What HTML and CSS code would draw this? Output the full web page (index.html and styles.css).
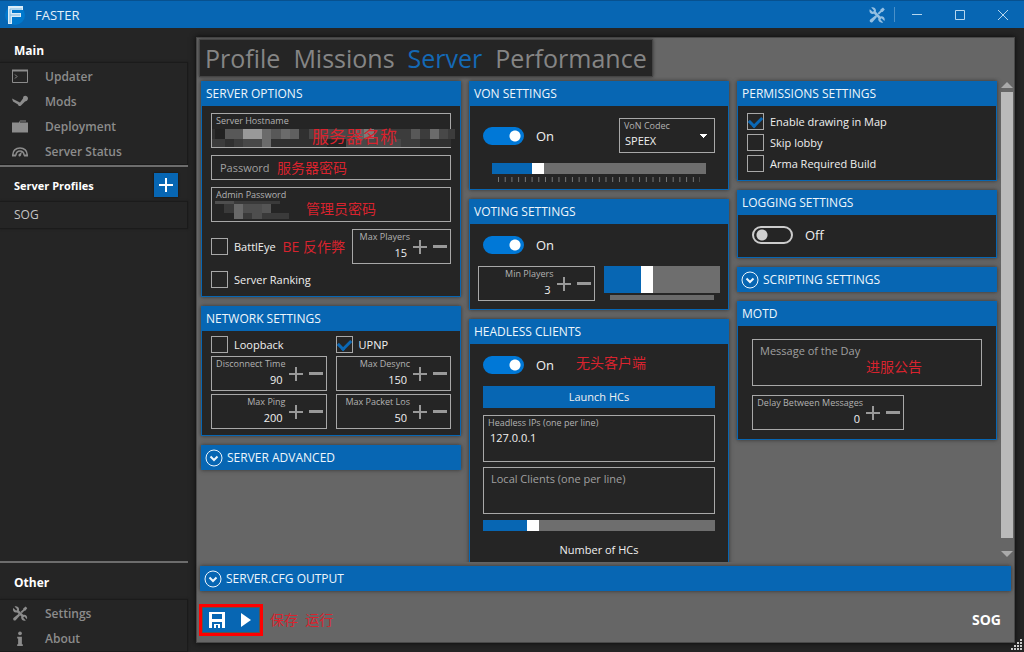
FILE: index.html
```html
<!DOCTYPE html>
<html lang="en">
<head>
<meta charset="utf-8">
<title>FASTER</title>
<link rel="stylesheet" href="styles.css">
</head>
<body>
<svg class="defs" width="0" height="0" aria-hidden="true">
  <symbol id="tools" viewBox="0 0 16 16">
    <path d="M2.2 .6 L5 3.4 L4 5 L.8 2.200 C-.2 4.400 1 6.800 3.600 7 L5 6.800 L9.400 11.200 L9.200 12.600 C9.600 15.200 12 16.200 14.200 15.400 L11.400 12.600 L12.600 11.200 L15.400 14 C16.400 11.800 15 9.400 12.600 9.200 L11.400 9.400 L6.800 4.800 L7 3.200 C6.600 .8 4.200 -.2 2.200 .6Z"/>
    <path d="M14 .6 L15.800 2.400 L13.600 5 L12.600 5 L10 7.600 L8.600 6.200 L11.400 3.600 L11.400 2.600Z M6.600 8.200 L8.200 9.800 L3.400 15.200 C1.800 16.200 0 14.400 1 12.800Z"/>
  </symbol>
  <symbol id="plus" viewBox="0 0 14 14"><path d="M6 0h2v6h6v2H8v6H6V8H0V6h6z"/></symbol>
  <symbol id="minus" viewBox="0 0 14 14"><path d="M0 5h14v3H0z"/></symbol>
  <symbol id="expand" viewBox="0 0 18 18"><circle cx="9" cy="9" r="8" fill="none" stroke="currentColor"/><path d="M5.5 7.5 9 11l3.500-3.500" fill="none" stroke="currentColor" stroke-width="2"/></symbol>
</svg>

<header class="titlebar">
  <svg class="logo" viewBox="0 0 20 22"><circle cx="10" cy="11" r="10" fill="#0078cc"/><path d="M3 2h15v4H7v3h9v4H7v7H3z" fill="#d9ecf8"/><path d="M5 5h12M5 11h10M5 5v14" stroke="#7db8df" fill="none"/></svg>
  <h1 class="app-name">FASTER</h1>
  <button class="win-btn tools" aria-label="Tools"><svg viewBox="0 0 16 16"><use href="#tools"/></svg></button>
  <button class="win-btn" aria-label="Minimize"><svg viewBox="0 0 10 10"><path d="M0 4.500h10" stroke="currentColor"/></svg></button>
  <button class="win-btn" aria-label="Maximize"><svg viewBox="0 0 10 10"><path d="M.5.5h9v9h-9z" stroke="currentColor" fill="none"/></svg></button>
  <button class="win-btn" aria-label="Close"><svg viewBox="0 0 10 10"><path d="M0 0l10 10M10 0L0 10" stroke="currentColor"/></svg></button>
</header>

<div class="shell">
  <nav class="sidebar">
    <h2 class="side-title">Main</h2>
    <div class="side-list">
      <a class="side-item" href="#"><svg viewBox="0 0 16 14"><path d="M.5 1h15v12H.5z" fill="none" stroke="currentColor"/><path d="M0 0h16v2H0z"/><path d="M3 5l2 2-2 2" fill="none" stroke="currentColor"/></svg>Updater</a>
      <a class="side-item" href="#"><svg viewBox="0 0 16 14"><path d="M0 4 5 6.500 8 8l3-4c0-4 5-3 5 0 0 2-2 3-3 3L9 11c-1 1-3 .5-3-1L1 7z"/></svg>Mods</a>
      <a class="side-item" href="#"><svg viewBox="0 0 16 14"><path d="M0 3h7l1-2h6v2h2v10H0z"/><path d="M8 2.500h6" stroke="#252525"/></svg>Deployment</a>
      <a class="side-item" href="#"><svg viewBox="0 0 16 14"><path d="M1 11C-.5 1 16.500 1 15 11M4 11c-.5-6 8.500-6 8 0" fill="none" stroke="currentColor" stroke-width="1.500"/><path d="M6.500 10 10 7l-1 4c-1 2-3 1-2.500-1zM0 10h4v2H0zM12 10h4v2h-4z"/></svg>Server Status</a>
    </div>
    <div class="side-head ruled">
      <h2 class="side-title small">Server Profiles</h2>
      <button class="add" aria-label="Add profile"><svg viewBox="0 0 14 14"><use href="#plus"/></svg></button>
    </div>
    <div class="side-list"><a class="profile" href="#">SOG</a></div>
    <div class="side-bottom">
      <h2 class="side-title ruled">Other</h2>
      <div class="side-list">
        <a class="side-item" href="#"><svg viewBox="0 0 16 16"><use href="#tools"/></svg>Settings</a>
        <a class="side-item" href="#"><svg viewBox="0 0 16 16"><circle cx="8" cy="2.500" r="2"/><path d="M5 6h5v8h1v2H5v-2h1V8H5z"/></svg>About</a>
      </div>
    </div>
  </nav>

  <main class="panel">
    <nav class="tabs">
      <a href="#">Profile</a><a href="#">Missions</a><a href="#" class="active">Server</a><a href="#">Performance</a>
    </nav>

    <div class="scroller">
      <div class="columns">
        <div class="column">
          <section class="card">
            <h3 class="card-head">SERVER OPTIONS</h3>
            <div class="card-body options">
              <div class="field">
                <label for="host">Server Hostname</label>
                <input id="host" type="text">
                <svg class="mosaic host" viewBox="0 0 243 18" shape-rendering="crispEdges">
                  <path fill="#303030" d="M0 0h243v10H0zM0 10h239v8H0z"/>
                  <path fill="#222" d="M3 0h10v10H3zM115 10h19v8h-19z"/>
                  <path fill="#585858" d="M13 0h18v10H13zM59 0h10v10H59zM199 0h9v10h-9z"/>
                  <path fill="#999" d="M31 0h19v10H31z"/>
                  <path fill="#6b6b6b" d="M50 0h9v10h-9zM69 0h9v10h-9zM50 10h9v8h-9zM218 0h9v10h-9z"/>
                  <path fill="#606060" d="M78 0h9v10h-9zM143 0h9v10h-9z"/>
                  <path fill="#7a7a7a" d="M152 0h10v10h-10z"/>
                  <path fill="#484848" d="M97 0h46v10H97zM162 0h9v10h-9zM227 0h9v10h-9zM31 10h19v8H31zM134 10h55v8h-55z"/>
                  <path fill="#3c3c3c" d="M171 0h28v10h-28zM208 0h10v10h-10zM236 0h7v10h-7zM0 10h13v8H0zM22 10h9v8h-9zM189 10h19v8h-19z"/>
                </svg>
                <span class="note large">服务器名称</span>
              </div>
              <div class="field short">
                <input type="password" placeholder="Password" aria-label="Password">
                <span class="note pass">服务器密码</span>
              </div>
              <div class="field">
                <label for="admin">Admin Password</label>
                <input id="admin" type="password">
                <svg class="mosaic admin" viewBox="0 0 74 18" shape-rendering="crispEdges">
                  <path fill="#3a3a3a" d="M0 0h65v3H0zM9 3h47v9H9zM19 12h55v6H19z"/>
                  <path fill="#4e4e4e" d="M0 0h19v3H0zM28 3h19v9H28zM37 12h10v6H37z"/>
                  <path fill="#686868" d="M19 3h9v15h-9z"/>
                  <path fill="#555" d="M47 3h9v9h-9z"/>
                </svg>
                <span class="note adm">管理员密码</span>
              </div>
              <div class="battl">
                <label class="check"><input type="checkbox">BattlEye</label>
                <span class="remark">BE 反作弊</span>
                <div class="number">
                  <label for="maxp">Max Players</label><input id="maxp" type="text" value="15">
                  <button aria-label="Increase"><svg><use href="#plus"/></svg></button><button aria-label="Decrease"><svg><use href="#minus"/></svg></button>
                </div>
              </div>
              <label class="check"><input type="checkbox">Server Ranking</label>
            </div>
          </section>

          <section class="card">
            <h3 class="card-head">NETWORK SETTINGS</h3>
            <div class="card-body network">
              <label class="check"><input type="checkbox">Loopback</label>
              <label class="check"><input type="checkbox" checked>UPNP</label>
              <div class="number">
                <label for="disc">Disconnect Time</label><input id="disc" type="text" value="90">
                <button aria-label="Increase"><svg><use href="#plus"/></svg></button><button aria-label="Decrease"><svg><use href="#minus"/></svg></button>
              </div>
              <div class="number">
                <label for="desync">Max Desync</label><input id="desync" type="text" value="150">
                <button aria-label="Increase"><svg><use href="#plus"/></svg></button><button aria-label="Decrease"><svg><use href="#minus"/></svg></button>
              </div>
              <div class="number">
                <label for="ping">Max Ping</label><input id="ping" type="text" value="200">
                <button aria-label="Increase"><svg><use href="#plus"/></svg></button><button aria-label="Decrease"><svg><use href="#minus"/></svg></button>
              </div>
              <div class="number">
                <label for="loss">Max Packet Los</label><input id="loss" type="text" value="50">
                <button aria-label="Increase"><svg><use href="#plus"/></svg></button><button aria-label="Decrease"><svg><use href="#minus"/></svg></button>
              </div>
            </div>
          </section>
          <button class="expander"><svg viewBox="0 0 18 18"><use href="#expand"/></svg>SERVER ADVANCED</button>
        </div>

        <div class="column">
          <section class="card">
            <h3 class="card-head">VON SETTINGS</h3>
            <div class="card-body von">
              <div class="von-row">
                <label class="toggle"><input type="checkbox" checked>On</label>
                <div class="codec">
                  <label for="codec">VoN Codec</label>
                  <select id="codec"><option>SPEEX</option></select>
                </div>
              </div>
              <div class="slide-wrap">
                <input type="range" class="slider" min="0" max="30" value="6" style="--fill:20%" aria-label="VoN quality">
                <div class="ticks"></div>
              </div>
            </div>
          </section>

          <section class="card">
            <h3 class="card-head">VOTING SETTINGS</h3>
            <div class="card-body voting">
              <label class="toggle"><input type="checkbox" checked>On</label>
              <div class="number">
                <label for="minp">Min Players</label><input id="minp" type="text" value="3">
                <button aria-label="Increase"><svg><use href="#plus"/></svg></button><button aria-label="Decrease"><svg><use href="#minus"/></svg></button>
              </div>
              <div>
                <input type="range" class="slider tall" min="0" max="100" value="36" style="--fill:36%" aria-label="Vote threshold">
                <div class="ticks dense"></div>
              </div>
            </div>
          </section>

          <section class="card">
            <h3 class="card-head">HEADLESS CLIENTS</h3>
            <div class="card-body headless">
              <div class="toggle-row"><label class="toggle"><input type="checkbox" checked>On</label><span class="remark">无头客户端</span></div>
              <button class="launch">Launch HCs</button>
              <div class="field area">
                <label for="ips">Headless IPs (one per line)</label>
                <textarea id="ips">127.0.0.1</textarea>
              </div>
              <div class="field area plain">
                <textarea placeholder="Local Clients (one per line)" aria-label="Local Clients"></textarea>
              </div>
              <input id="hcs" type="range" class="slider" min="0" max="100" value="20" style="--fill:20%">
              <label class="caption" for="hcs">Number of HCs</label>
            </div>
          </section>
        </div>

        <div class="column">
          <section class="card">
            <h3 class="card-head">PERMISSIONS SETTINGS</h3>
            <div class="card-body perms">
              <label class="check"><input type="checkbox" checked>Enable drawing in Map</label>
              <label class="check"><input type="checkbox">Skip lobby</label>
              <label class="check"><input type="checkbox">Arma Required Build</label>
            </div>
          </section>
          <section class="card">
            <h3 class="card-head">LOGGING SETTINGS</h3>
            <div class="card-body logging"><label class="toggle"><input type="checkbox">Off</label></div>
          </section>
          <button class="expander"><svg viewBox="0 0 18 18"><use href="#expand"/></svg>SCRIPTING SETTINGS</button>
          <section class="card">
            <h3 class="card-head">MOTD</h3>
            <div class="card-body motd">
              <div class="field area plain">
                <textarea placeholder="Message of the Day" aria-label="Message of the Day"></textarea>
                <span class="note day">进服公告</span>
              </div>
              <div class="number">
                <label for="delay">Delay Between Messages</label><input id="delay" type="text" value="0">
                <button aria-label="Increase"><svg><use href="#plus"/></svg></button><button aria-label="Decrease"><svg><use href="#minus"/></svg></button>
              </div>
            </div>
          </section>
        </div>
      </div>
      <div class="scrollbar">
        <svg viewBox="0 0 12 6"><path d="M0 6 6 0l6 6z"/></svg>
        <div class="bar"></div>
        <svg viewBox="0 0 12 6"><path d="M0 0h12L6 6z"/></svg>
      </div>
    </div>

    <button class="expander output"><svg viewBox="0 0 18 18"><use href="#expand"/></svg>SERVER.CFG OUTPUT</button>
    <footer class="actions">
      <div class="action-box">
        <button aria-label="Save"><svg viewBox="0 0 16 16"><path fill-rule="evenodd" d="M0 0h16v16H0zM3 2v5h10V2zM3 10v6h2v-4h6v4h2v-6zM7 13h2v3H7z"/></svg></button>
        <button aria-label="Run"><svg viewBox="0 0 16 16"><path d="M3 1l10 7-10 7z"/></svg></button>
      </div>
      <span class="remark">保存&nbsp; 运行</span>
      <strong class="current">SOG</strong>
    </footer>
  </main>
  <svg class="grip" viewBox="0 0 12 12" shape-rendering="crispEdges"><path d="M9 0h2v2H9zM6 3h2v2H6zM9 3h2v2H9zM3 6h2v2H3zM6 6h2v2H6zM9 6h2v2H9zM0 9h2v2H0zM3 9h2v2H3zM6 9h2v2H6zM9 9h2v2H9z"/></svg>
</div>
</body>
</html>
```
FILE: styles.css
```css
:root {
  --blue: #0766b3;
  --dark: #252525;
  --line: #a8a8a8;
  --red: #d8232e;
}
* { box-sizing: border-box; }
body {
  margin: 0;
  height: 100vh;
  display: flex;
  flex-direction: column;
  overflow: hidden;
  background: var(--dark);
  color: #f0f0f0;
  font: 11px/16px "Open Sans", "Noto Sans CJK SC", sans-serif;
}
h1, h2, h3 { margin: 0; font-weight: 400; }
a { color: inherit; text-decoration: none; }
button, input, select, textarea { font: inherit; color: inherit; margin: 0; padding: 0; border: 0; border-radius: 0; background: none; outline: 0; }
svg { display: block; fill: currentColor; }
.defs { position: absolute; }

.titlebar { display: flex; align-items: center; flex: none; height: 28px; padding-left: 5px; background: var(--blue); border-top: 1px solid #07518f; }
.logo { width: 20px; height: 22px; }
.app-name { flex: 1; margin-left: 10px; font-size: 13px; color: #e4f0f9; }
.win-btn { display: grid; place-items: center; width: 43px; height: 26px; color: #b5d6ee; }
.win-btn svg { width: 10px; height: 10px; }
.win-btn.tools { width: 34px; height: 15px; padding-right: 2px; color: #93bfe2; border-right: 1px solid #4a90c8; }
.win-btn.tools svg { width: 16px; height: 16px; }

.shell { position: relative; flex: 1; display: flex; gap: 8px; min-height: 0; padding: 9px 9px 9px 0; }
.sidebar { flex: 0 0 188px; display: flex; flex-direction: column; margin-bottom: -9px; }
.side-title { padding: 5px 14px 3px; font-size: 12px; line-height: 17px; font-weight: 700; color: #fff; }
.side-title.small { padding: 0; font-size: 11px; }
.side-list { border: 1px solid #1b1b1b; border-left: 0; box-shadow: 0 0 2px #1b1b1b; padding-top: 1px; }
.side-item { display: flex; align-items: center; gap: 17px; height: 25px; padding-left: 12px; font-size: 12px; font-weight: 600; color: #8c8c8c; }
.side-item svg { width: 16px; height: 15px; }
.ruled { border-top: 2px solid #6d6d6d; }
.side-head { display: flex; align-items: center; justify-content: space-between; padding: 6px 10px 4px 14px; }
.add { display: grid; place-items: center; width: 24px; height: 24px; background: var(--blue); color: #fff; box-shadow: 0 0 2px #111; }
.add svg { width: 14px; height: 14px; }
.profile { display: block; padding: 4px 14px 5px; font-size: 12px; color: #c4c4c4; }
.side-bottom { margin-top: auto; }
.side-bottom .side-title { padding-top: 11px; padding-bottom: 8px; }

.panel { flex: 1; min-width: 0; display: flex; flex-direction: column; padding: 1px 0 0 3px; border: 1px solid #484848; background: #666; box-shadow: 0 0 6px #0a0a0a; }
.tabs { display: flex; align-self: flex-start; gap: 13px; height: 38px; margin-left: -1px; padding: 0 5px; background: var(--dark); border: 1px solid #444; box-shadow: 0 0 3px #333; font-size: 25px; line-height: 36px; color: #858585; }
.tabs .active { color: #1469b5; }

.scroller { flex: 1; min-height: 0; display: flex; gap: 4px; overflow: hidden; padding-left: 3px; margin-left: -2px; }
.columns { flex: 1; display: grid; grid-template-columns: repeat(3, minmax(0, 1fr)); gap: 8px; align-items: start; padding-top: 4px; }
.column { display: flex; flex-direction: column; gap: 9px; }
.card { border: 1px solid var(--blue); background: var(--dark); box-shadow: 0 0 4px #333; }
.card-head { height: 24px; padding: 0 4px; line-height: 24px; background: var(--blue); color: #eef6fc; font-size: 12px; white-space: nowrap; }
.expander { display: flex; align-items: center; gap: 4px; height: 25px; padding-left: 4px; font-size: 12px; background: var(--blue); color: #eef6fc; box-shadow: 0 0 4px #333; }
.expander svg { width: 18px; height: 18px; }
.card-body { padding: 7px 9px 6px; }

.scrollbar { display: flex; flex-direction: column; gap: 4px; width: 13px; padding: 5px 1px 5px 0; color: #aaa; }
.scrollbar svg { width: 12px; height: 6px; }
.bar { flex: 1; margin-bottom: 9px; background: #bababa; }

.field { position: relative; height: 35px; border: 1px solid var(--line); }
.field label, .number label, .codec label { display: block; font-size: 9px; line-height: 12px; color: #b2b2b2; white-space: nowrap; }
.field label { padding: 1px 4px 0; }
.field input { display: block; width: 100%; height: 18px; padding: 0 8px; }
.field.short { height: 25px; }
.field.short input { height: 23px; }
::placeholder { color: #a0a0a0; opacity: 1; }
.mosaic { position: absolute; height: 18px; }
.mosaic.host { left: 0; top: 15px; width: 243px; }
.mosaic.admin { left: 3px; top: 13px; width: 74px; }
.note, .remark { color: var(--red); font-size: 14px; line-height: 20px; white-space: nowrap; }
.note { position: absolute; }
.note.large { left: 100px; top: 13px; font-size: 17px; }
.note.pass { left: 65px; top: 2px; }
.note.adm { left: 94px; top: 11px; }
.note.day { left: 113px; top: 17px; }

.options { display: flex; flex-direction: column; gap: 7px; padding-bottom: 8px; }
.battl { display: flex; align-items: center; justify-content: space-between; }
.battl .number { width: 99px; }
.check { display: flex; align-items: center; gap: 6px; height: 17px; white-space: nowrap; }
.check input { appearance: none; flex: none; width: 17px; height: 17px; border: 1px solid var(--line); }
.check input:checked { display: grid; place-items: center; }
.check input:checked::before { content: ""; width: 10px; height: 6px; margin-top: -3px; border: solid #0b68b5; border-width: 0 0 3px 3px; transform: rotate(-45deg); }
.number { display: grid; grid-template-columns: minmax(0, 1fr) 20px 20px; grid-template-rows: 13px 20px; height: 35px; padding-left: 4px; border: 1px solid var(--line); overflow: hidden; }
.number label { grid-column: 1; justify-self: end; padding-top: 1px; }
.number input { grid-column: 1; grid-row: 2; width: 100%; height: 18px; padding-right: 3px; text-align: right; }
.number button { grid-row: 1 / 3; display: grid; place-items: center; color: #999; }
.number svg { width: 14px; height: 14px; }
.network { display: grid; grid-template-columns: 1fr 1fr; gap: 3px 9px; padding: 5px 9px 6px; }

.toggle { display: flex; align-items: center; gap: 12px; height: 18px; font-size: 13px; }
.toggle input { appearance: none; width: 41px; height: 18px; border: 2px solid #ccc; border-radius: 9px; background: radial-gradient(circle at 8px 7px, #d0d0d0 5px, transparent 6px); }
.toggle input:checked { border-color: #0078d7; background: radial-gradient(circle at 30px 7px, #fff 5px, #0078d7 6px); }
.von { padding: 12px 13px 7px; }
.von-row { display: flex; align-items: center; justify-content: space-between; }
.codec { width: 96px; height: 35px; border: 1px solid var(--line); }
.codec label { padding: 1px 4px 0; }
.codec select { appearance: none; display: block; width: 100%; height: 18px; padding-left: 5px; background: linear-gradient(to bottom right, #fff 50%, transparent 50%) 93% 2px / 4px 4px no-repeat, linear-gradient(to bottom left, #fff 50%, transparent 50%) 89% 2px / 4px 4px no-repeat; }
.slide-wrap { padding: 10px 9px 0; }
.slider { appearance: none; display: block; width: 100%; height: 11px; background: linear-gradient(90deg, var(--blue) var(--fill), #6e6e6e var(--fill)); }
.slider.tall { height: 27px; }
.slider::-webkit-slider-thumb { appearance: none; width: 12px; height: 11px; background: #fff; }
.slider.tall::-webkit-slider-thumb { height: 27px; }
.ticks { height: 5px; margin: 3px 6px 0; background: linear-gradient(90deg, #777 1px, transparent 1px) 0 0 / calc(100% / 30) 100%; }
.ticks.dense { margin-top: 2px; background: #6a6a6a; }
.voting { display: grid; grid-template-columns: 1fr 1fr; gap: 12px 9px; padding: 12px 8px 8px; }
.voting .toggle { grid-column: 1 / 3; margin-left: 5px; }
.headless { display: flex; flex-direction: column; gap: 6px; padding: 12px 13px; }
.toggle-row { display: flex; align-items: center; gap: 22px; height: 18px; margin-bottom: 6px; }
.toggle-row .remark { margin-top: -4px; }
.launch { height: 22px; margin-bottom: 1px; background: var(--blue); }
.area { height: 47px; }
.area textarea { display: block; width: 100%; height: 32px; padding: 1px 6px; resize: none; overflow: hidden; }
.area.plain textarea { height: 45px; padding: 3px 7px; }
.headless .area + .area { margin-top: -1px; }
.caption { padding-top: 5px; text-align: center; }
.perms { display: flex; flex-direction: column; gap: 4px; padding-bottom: 8px; }
.logging { padding: 11px 14px 13px; }
.motd { padding: 13px 14px 9px; }
.motd .number { width: 152px; margin-top: 9px; }

.output { flex: none; margin: 4px 3px 0 0; }
.actions { display: flex; align-items: center; gap: 7px; flex: none; height: 51px; padding: 6px 13px 0 0; }
.action-box { display: flex; height: 32px; margin-left: -1px; border: 3px solid #f00; background: var(--blue); box-shadow: inset 0 0 0 1px #555; }
.action-box button { display: grid; place-items: center; width: 29px; color: #fff; }
.action-box svg { width: 16px; height: 16px; }
.current { margin-left: auto; font-size: 14px; color: #fff; }
.grip { position: absolute; right: 1px; bottom: 1px; width: 12px; height: 12px; color: #ccc; }
```
